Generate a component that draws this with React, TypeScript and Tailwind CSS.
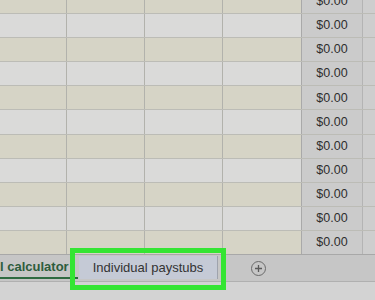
import React from 'react'

const rows = Array.from({ length: 11 }, (_, i) => i)

const App = () => {
    return (
        <div className="w-[375px] h-[300px] overflow-hidden bg-[#d2d2d2] flex flex-col" style={{ fontFamily: '"Liberation Sans", Arial, sans-serif' }}>
            {/* grid */}
            <div className="h-[254px] overflow-hidden flex flex-col">
                <div className="flex flex-col mt-[-10px]">
                    {rows.map((i) => {
                        const beige = i % 2 === 0
                        const bg = beige ? 'bg-[#d6d4c6]' : 'bg-[#dadad9]'
                        return (
                            <div key={i} className="grid grid-cols-[67px_78px_78px_79px_61px_1fr] h-[24.1px] border-b border-[#bcbcb6]">
                                <div className={`${bg} border-r border-[#b2b2ac]`}></div>
                                <div className={`${bg} border-r border-[#b2b2ac]`}></div>
                                <div className={`${bg} border-r border-[#b2b2ac]`}></div>
                                <div className={`${bg} border-r border-[#a9a9a9]`}></div>
                                <div className="bg-[#cbcbcb] border-r border-[#b4b4b4] flex items-center justify-center text-[12.5px] text-[#2e2e2e]">$0.00</div>
                                <div className="bg-[#cecece]"></div>
                            </div>
                        )
                    })}
                </div>
            </div>

            {/* sheet tabs */}
            <div className="h-[28px] bg-[#c6c6c6] border-t border-[#a8a8a8] border-b border-b-[#b0b0b0] flex items-start">
                <div className="w-[78px] h-[24px] flex items-center border-b-2 border-[#2f6a41]">
                    <span className="text-[13px] font-bold text-[#2d5c3c] leading-none">l calculator</span>
                </div>
                <div className="relative ml-[1px] mt-[1px] w-[139px] h-[23px] bg-[#c5cad6] border-r border-[#9fa3ad] flex items-center justify-center">
                    <span className="text-[13px] text-[#333] leading-none">Individual paystubs</span>
                    <span className="absolute left-[-9px] right-[-9px] top-[-8px] bottom-[-11px] border-[5px] border-[#35e533]"></span>
                </div>
                <div className="ml-[33px] mt-[6px] w-[15px] h-[15px] rounded-full border border-[#6a6a6a] flex items-center justify-center">
                    <svg width="9" height="9" viewBox="0 0 9 9">
                        <path d="M4.5 1v7M1 4.5h7" stroke="#5a5a5a" strokeWidth="1.3" />
                    </svg>
                </div>
            </div>

            <div className="flex-1 bg-[#d3d3d3]"></div>
        </div>
    )
}

export default App
